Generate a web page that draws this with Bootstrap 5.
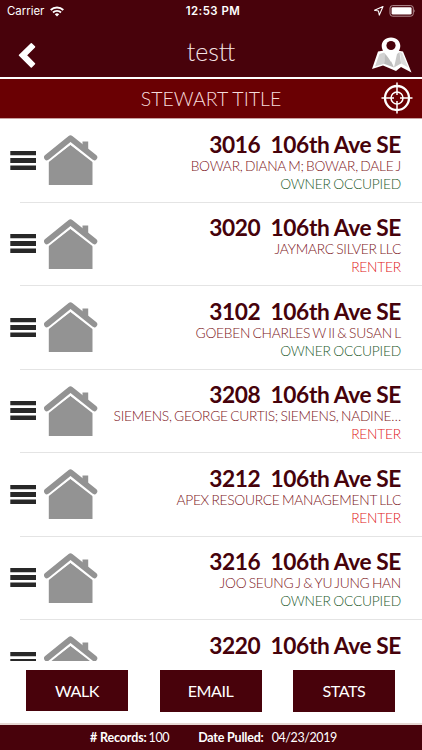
<!DOCTYPE html>
<html lang="en">
<head>
<meta charset="utf-8">
<meta name="viewport" content="width=device-width, initial-scale=1">
<title>testt</title>
<link href="https://cdn.jsdelivr.net/npm/bootstrap@5.3.0/dist/css/bootstrap.min.css" rel="stylesheet">
<style>
  body { font-family: Lato, "Liberation Sans", sans-serif; height: 750px; color: #46020b; }
  .maroon { background: #48020b; color: #fff; }
  .status-bar { height: 22px; font: 11.4px/22px Inter, "Liberation Sans", sans-serif; padding: 0 6px 0 7px; }
  .clock { font-weight: 600; letter-spacing: .5px; padding-left: 3px; }
  .side { width: 110px; }
  .wifi { margin-left: 6px; }
  .title-bar { height: 57px; border-bottom: 2px solid #fff; padding: 0 10px 0 18px; }
  .title-text { font-size: 25px; font-weight: 300; line-height: 60px; padding-top: 2px; color: #f3e3e4; margin-left: -8px; }
  .back { margin-top: 12px; }
  .map-pin { margin-top: 10px; }
  .band { height: 40px; background: #6a0003; border-bottom: 1px solid #c9a0a0; color: #f6dcdc; font-size: 19.5px; font-weight: 300; }
  .band-text { line-height: 40px; }
  .records { height: 542px; }
  .record { height: 83.45px; padding: 14px 21px 0 10.4px; }
  .record::after { content: ""; display: block; position: absolute; left: 20px; right: 0; bottom: -.5px; height: 1px; background: #e4e4e4; }
  .grip { margin-top: 18px; }
  .house { margin: 2.4px 0 0 7.6px; }
  .record-text { width: 300px; margin-left: -10px; }
  .address { font-size: 22.7px; font-weight: 700; line-height: 24px; white-space: pre; letter-spacing: -.38px; }
  .owner, .occupancy { font-size: 13.8px; font-weight: 300; line-height: 18px; letter-spacing: -.28px; word-spacing: -1px; }
  .owner { color: #7d1622; }
  .owner-occ { color: #1d5a2b; }
  .renter { color: #e01520; }
  .occupancy { letter-spacing: -.22px; }
  .actions { height: 62px; padding: 9px 27px 0 26px; }
  .action { width: 102px; height: 42px; font-size: 16.1px; padding: 1px 0 0; border: 0; border-radius: 0; letter-spacing: -.45px; }
  .action:first-child { height: 41px; }
  .action:hover { background: #48020b; color: #fff; }
  .info-bar { height: 27px; border-top: 2px solid #e6d8d4; font-size: 12.5px; line-height: 26px; padding-left: 90px; letter-spacing: -.14px; }
  .count, .pull-date { letter-spacing: -.4px; }
  .count { padding-left: 2px; }
  .pulled { margin-left: 29px; letter-spacing: -.2px; }
  .pull-date { margin-left: 8px; }
</style>
<script src="https://cdn.jsdelivr.net/npm/bootstrap@5.3.0/dist/js/bootstrap.bundle.min.js"></script>
</head>
<body class="bg-white overflow-hidden d-flex flex-column">
<svg class="d-none" xmlns="http://www.w3.org/2000/svg">
  <symbol id="grip" viewBox="0 0 26 20"><path fill="#282828" d="M.3 0H26v4.200H.3zM.3 7.100H26v4.800H.3zM.3 14.500H26v4.500H.3z"/></symbol>
  <symbol id="house" viewBox="0 0 54 51">
    <path fill="#939393" d="M4.800 26 26.500 9.800l22 16.200V50H4.800z"/>
    <path fill="none" stroke="#fff" stroke-width="4" d="M2 26.800 26.500 7.300l25 19.500"/>
    <path fill="none" stroke="#939393" stroke-width="5.900" stroke-linecap="round" stroke-linejoin="round" d="M3 22.300 26.500 3.300l23.800 19"/>
    <path fill="#939393" d="M38.500 6.500h5.700V18l-5.700-5z"/>
  </symbol>
</svg>

<header>
  <div class="maroon status-bar d-flex justify-content-between align-items-center">
    <div class="side d-flex align-items-center">Carrier
      <svg class="wifi" width="14" height="11" viewBox="0 0 14 11"><g fill="none" stroke="#fff" stroke-width="1.900"><path d="M.7 4A9 9 0 0 1 13.300 4"/><path d="M3 6.500a5.700 5.700 0 0 1 8 0"/></g><path fill="#fff" d="M7 10.500 4.800 8.300a3.200 3.200 0 0 1 4.400 0z"/></svg>
    </div>
    <div class="clock">12:53 PM</div>
    <div class="side d-flex justify-content-end align-items-center">
      <svg class="me-1" width="12" height="12" viewBox="0 0 12 12"><path fill="none" stroke="#fff" stroke-width="1.100" stroke-linejoin="round" d="M10 1.500 1.500 5.300l4 .7.800 4.100z"/></svg>
      <svg width="27" height="12" viewBox="0 0 27 12"><rect x="1" y=".6" width="23.300" height="10.600" rx="2.600" fill="none" stroke="#b38f93"/><rect x="2.600" y="2.200" width="20" height="7.400" rx="1.300" fill="#fff"/><path fill="#b38f93" d="M25.300 4.200q1.500 1.700 0 3.400z"/></svg>
    </div>
  </div>
  <nav class="maroon title-bar d-flex justify-content-between align-items-center">
    <svg class="back" width="40" height="30" viewBox="0 0 40 30"><path fill="#fff" stroke="#fff" stroke-width="1.500" stroke-linejoin="round" d="M13.300 2.700 1.500 14.300 13.300 26l3.200-3.200-8.300-8.500 8.300-8.400z"/></svg>
    <div class="title-text">testt</div>
    <svg class="map-pin" width="40" height="36" viewBox="0 0 40 36">
      <path fill="#fff" d="M6 14.500 0 32l11-3.500 13 5.500 5-4 10.500 5.500L31 14.500l-6-1H12z"/>
      <path fill="#d2d2d2" d="M7.500 17 3 29.500l9-2.800L14 15z"/>
      <path fill="#bdbdbd" d="m13.500 15-1.500 11.700 10 3.800L19 24z"/>
      <path fill="#c7c7c7" d="M25 17l-3 13.500 7-4L27.500 15z"/>
      <path fill="#dedede" d="m28 15 1.200 11.500 7 4L30 16z"/>
      <path fill="#fff" d="M19 .5c-5.800 0-9.300 3.700-9.300 8.500 0 5.700 5.500 9 9.300 16 3.800-7 9.300-10.300 9.300-16C28.300 4.200 24.800.5 19 .5z"/>
      <circle cx="19" cy="8.500" r="4.600" fill="#48020b"/>
    </svg>
  </nav>
  <div class="band position-relative d-flex justify-content-center align-items-center">
    <div class="band-text">STEWART TITLE</div>
    <svg class="position-absolute end-0 me-2" width="33" height="33" viewBox="0 0 33 33"><g fill="none" stroke="#fff"><circle cx="16" cy="16" r="12" stroke-width="2.300"/><circle cx="16" cy="16" r="6" stroke-width="1.500"/><path stroke-width="1.500" d="M16 .500V13M16 19v12.500M.500 16H13M19 16h12.500"/></g></svg>
  </div>
</header>

<main class="records overflow-hidden flex-shrink-0" id="records"></main>

<div class="actions d-flex justify-content-between align-items-start flex-shrink-0">
  <button class="btn maroon action">WALK</button>
  <button class="btn maroon action">EMAIL</button>
  <button class="btn maroon action">STATS</button>
</div>
<footer class="maroon info-bar d-flex flex-shrink-0">
  <div><b># Records:</b><span class="count">100</span></div>
  <div class="pulled"><b>Date Pulled:</b><span class="pull-date">04/23/2019</span></div>
</footer>

<script>
  const records = [
    ["3016", "BOWAR, DIANA M; BOWAR, DALE J", true],
    ["3020", "JAYMARC SILVER LLC", false],
    ["3102", "GOEBEN CHARLES W II & SUSAN L", true],
    ["3208", "SIEMENS, GEORGE CURTIS; SIEMENS, NADINE…", false],
    ["3212", "APEX RESOURCE MANAGEMENT LLC", false],
    ["3216", "JOO SEUNG J & YU JUNG HAN", true],
    ["3220", "", true]
  ];
  document.getElementById("records").innerHTML = records.map(([no, owner, occ]) => `
    <div class="record position-relative d-flex align-items-start">
      <svg class="grip flex-shrink-0" width="26" height="20"><use href="#grip"/></svg>
      <svg class="house flex-shrink-0" width="54" height="51"><use href="#house"/></svg>
      <div class="record-text ms-auto text-end text-nowrap">
        <div class="address">${no}  106th Ave SE</div>
        <div class="owner">${owner.replace("&", "&amp;")}</div>
        ${owner ? `<div class="occupancy ${occ ? "owner-occ" : "renter"}">${occ ? "OWNER OCCUPIED" : "RENTER"}</div>` : ""}
      </div>
    </div>`).join("");
</script>
</body>
</html>
